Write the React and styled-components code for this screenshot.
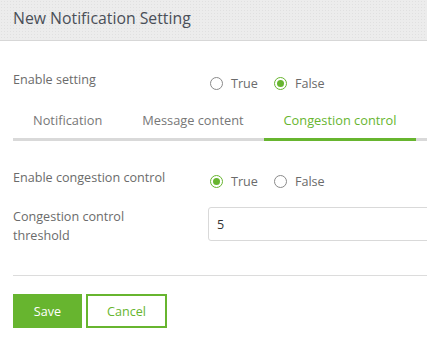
import React, { useState } from 'react';
import styled, { createGlobalStyle } from 'styled-components';

const green = '#67b52f';

const GlobalStyle = createGlobalStyle`
	html, body {
		margin: 0;
		padding: 0;
		background: #fff;
		overflow: hidden;
	}
	body {
		font-family: "Open Sans", "Noto Sans", sans-serif;
		font-size: 12.6px;
		color: #6b6b6b;
	}
`;

const Page = styled.div`
	width: 427px;
	height: 342px;
	overflow: hidden;
`;

const Header = styled.div`
	height: 40px;
	display: flex;
	align-items: center;
	padding: 0 13px;
	border-bottom: 1px solid #d7d7d7;
	background-color: #ececec;
	background-image: radial-gradient(rgba(0, 0, 0, 0.05) 0.6px, transparent 0.7px);
	background-size: 3px 3px;
`;

const Title = styled.h1`
	margin: 0;
	font-size: 15.8px;
	font-weight: 400;
	color: #4a4f58;
	padding-bottom: 4px;
`;

const Body = styled.div`
	padding-left: 13px;
	width: 480px;
`;

const Row = styled.div`
	display: flex;
	align-items: flex-start;
	margin-top: ${p => p.top || 0}px;
`;

const Label = styled.div`
	width: 195px;
	flex: none;
	line-height: 19px;
	color: #6b6b6b;
`;

const RadioGroup = styled.div`
	display: flex;
	align-items: center;
	height: 19px;
	margin-top: ${p => p.shift || 0}px;
`;

const RadioItem = styled.label`
	display: flex;
	align-items: center;
	margin-left: 2px;
	margin-right: 14px;
	cursor: pointer;
	color: #6b6b6b;
`;

const Circle = styled.span`
	box-sizing: border-box;
	width: 13px;
	height: 13px;
	border-radius: 50%;
	border: 1px solid ${p => (p.checked ? green : '#8a8a8a')};
	display: flex;
	align-items: center;
	justify-content: center;
	margin-right: 8px;
	&::after {
		content: '';
		width: 7px;
		height: 7px;
		border-radius: 50%;
		background: ${p => (p.checked ? green : 'transparent')};
	}
`;

const Tabs = styled.div`
	display: flex;
	margin-top: 9px;
	border-bottom: 3px solid #d9d9d9;
`;

const Tab = styled.div`
	padding: 0 20px;
	height: 36px;
	line-height: 36px;
	font-size: 12.8px;
	color: ${p => (p.active ? green : '#777')};
	margin-bottom: -3px;
	border-bottom: 3px solid ${p => (p.active ? green : 'transparent')};
	cursor: pointer;
`;

const Input = styled.input`
	box-sizing: border-box;
	width: 260px;
	height: 34px;
	border: 1px solid #d9d9d9;
	border-radius: 3px;
	padding: 0 8px;
	font-family: inherit;
	font-size: 12.6px;
	color: #333;
	outline: none;
	flex: none;
`;

const Divider = styled.div`
	height: 1px;
	background: #dcdcdc;
	margin-top: 30px;
`;

const Actions = styled.div`
	display: flex;
	gap: 4px;
	margin-top: 18px;
`;

const Button = styled.button`
	box-sizing: border-box;
	height: 34px;
	width: ${p => p.w}px;
	font-family: inherit;
	font-size: 12.6px;
	border-style: solid;
	border-color: ${green};
	border-width: ${p => (p.primary ? 0 : 2)}px;
	background: ${p => (p.primary ? green : '#fff')};
	color: ${p => (p.primary ? '#fff' : green)};
	cursor: pointer;
`;

const Radios = ({ value, onChange, shift }) => (
	<RadioGroup shift={shift}>
		<RadioItem onClick={() => onChange(true)}>
			<Circle checked={value === true} />
			True
		</RadioItem>
		<RadioItem onClick={() => onChange(false)}>
			<Circle checked={value === false} />
			False
		</RadioItem>
	</RadioGroup>
);

const App = () => {
	const [enabled, setEnabled] = useState(false);
	const [congestion, setCongestion] = useState(true);
	const [tab, setTab] = useState(2);
	const tabs = ['Notification', 'Message content', 'Congestion control'];

	return (
		<Page>
			<GlobalStyle />
			<Header>
				<Title>New Notification Setting</Title>
			</Header>
			<Body>
				<Row top={29}>
					<Label>Enable setting</Label>
					<Radios value={enabled} onChange={setEnabled} shift={4} />
				</Row>
				<Tabs>
					{tabs.map((t, i) => (
						<Tab key={t} active={tab === i} onClick={() => setTab(i)}>
							{t}
						</Tab>
					))}
				</Tabs>
				<Row top={27}>
					<Label>Enable congestion control</Label>
					<Radios value={congestion} onChange={setCongestion} shift={4} />
				</Row>
				<Row top={16}>
					<Label>
						Congestion control
						<br />
						threshold
					</Label>
					<Input defaultValue="5" />
				</Row>
				<Divider />
				<Actions>
					<Button primary w={69}>Save</Button>
					<Button w={81}>Cancel</Button>
				</Actions>
			</Body>
		</Page>
	);
};

export default App;
